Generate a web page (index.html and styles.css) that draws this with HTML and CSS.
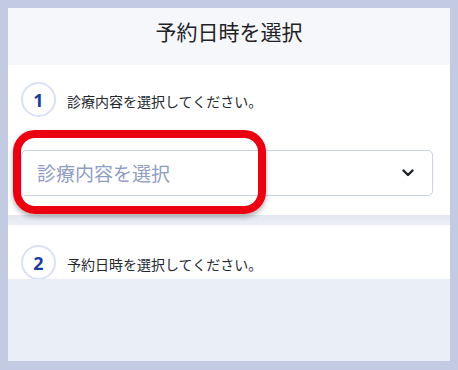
FILE: index.html
```html
<!DOCTYPE html>
<html lang="ja">
<head>
<meta charset="utf-8">
<link rel="stylesheet" href="styles.css">
</head>
<body>
<div class="frame">
  <div class="screen">
    <header class="header"><h1 class="title">予約日時を選択</h1></header>
    <section class="section section-one">
      <div class="step">
        <span class="step-num">1</span>
        <span class="step-text">診療内容を選択してください。</span>
      </div>
      <div class="select">
        <span class="placeholder">診療内容を選択</span>
        <svg class="chevron" width="12" height="8" viewBox="0 0 12 8"><path d="M1.5 1.5 L6 6 L10.5 1.5" fill="none" stroke="#1f2229" stroke-width="2.4" stroke-linecap="round" stroke-linejoin="round"/></svg>
      </div>
    </section>
    <div class="divider"></div>
    <section class="section section-two">
      <div class="step">
        <span class="step-num">2</span>
        <span class="step-text">予約日時を選択してください。</span>
      </div>
    </section>
    <div class="rest"></div>
    <div class="highlight"></div>
  </div>
</div>
</body>
</html>
```
FILE: styles.css
```css
* { box-sizing: border-box; }
html, body { margin: 0; padding: 0; }
body {
  background: #c3cbe3;
  font-family: "Noto Sans CJK JP", "Noto Sans", sans-serif;
  color: #22252b;
}
.frame {
  width: 458px;
  height: 370px;
  padding: 8px 8px 9px 8px;
}
.screen {
  position: relative;
  width: 442px;
  height: 353px;
  display: flex;
  flex-direction: column;
  background: #eaeef7;
  overflow: hidden;
}
.header {
  height: 57px;
  background: #f6f7fa;
  padding-top: 8px;
  flex: none;
}
.title {
  margin: 0;
  text-align: center;
  font-size: 21px;
  font-weight: 400;
  line-height: 30px;
  color: #1f2229;
}
.section {
  background: #ffffff;
  padding: 0 17px 0 13px;
  flex: none;
}
.section-one {
  height: 150px;
  padding-top: 17px;
}
.section-two {
  height: 54px;
  padding-top: 20px;
  overflow: hidden;
}
.divider {
  height: 10px;
  background: linear-gradient(#e4e7f1, #eceef5);
  flex: none;
}
.rest { flex: 1; background: #eaeef7; }
.step {
  display: flex;
  align-items: center;
  gap: 11px;
  height: 35px;
}
.step-num {
  width: 35px;
  height: 35px;
  border-radius: 50%;
  border: 2px solid #d8e1f6;
  display: flex;
  align-items: center;
  justify-content: center;
  font-family: "Noto Sans", sans-serif;
  font-weight: 700;
  font-size: 18px;
  color: #1b3d9c;
  flex: none;
}
.step-text {
  font-size: 14px;
  color: #25282e;
  line-height: 20px;
  padding-top: 2px;
}
.select {
  margin-top: 33px;
  height: 46px;
  width: 412px;
  border: 1px solid #cad2ea;
  border-radius: 5px;
  display: flex;
  align-items: center;
  justify-content: space-between;
  padding: 0 18px 0 15px;
}
.placeholder {
  font-size: 19px;
  color: #8f9cc3;
  line-height: 24px;
}
.chevron { display: block; }
.highlight {
  position: absolute;
  left: 5px;
  top: 122px;
  width: 253px;
  height: 84px;
  border: 8px solid #ea0010;
  border-radius: 22px;
  box-shadow: 0 3px 5px rgba(0, 0, 0, 0.3);
}
```
